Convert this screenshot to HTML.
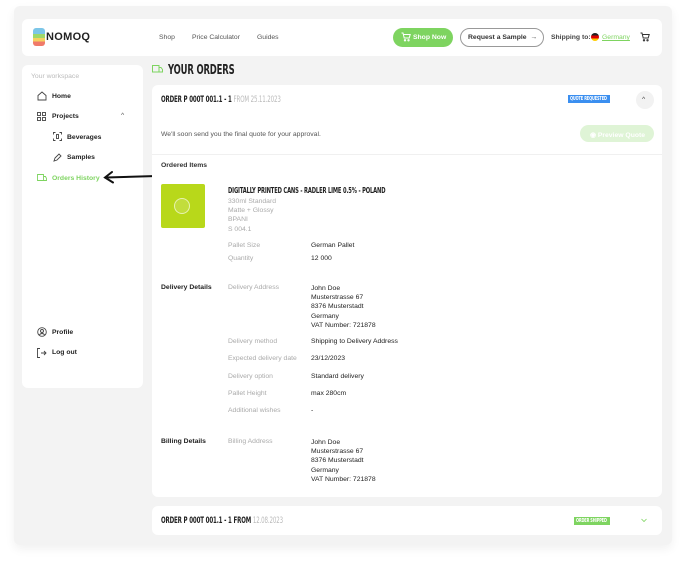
<!DOCTYPE html>
<html><head><meta charset="utf-8"><style>
*{margin:0;padding:0;box-sizing:border-box}
body{width:688px;height:564px;background:#fff;font-family:"Liberation Sans",sans-serif;position:relative;overflow:hidden;color:#222}
.a{position:absolute}
.frame{left:14px;top:6px;width:658px;height:539px;background:#f3f3f3;border-radius:6px;box-shadow:0 4px 10px rgba(0,0,0,.06)}
.card{background:#fff;border-radius:6px}
.t{font-size:6.8px;white-space:nowrap}
.g{color:#aaa}
.h{font-family:"DejaVu Sans Condensed","Liberation Sans",sans-serif;font-weight:bold;transform:scaleX(.72);transform-origin:left;white-space:nowrap;letter-spacing:-.2px}
.b{font-weight:bold}
</style></head><body>
<div class="a frame"></div>
<div class="a card" style="left:22px;top:19px;width:640px;height:37px"></div>
<div class="a" style="left:33px;top:28px;width:12px;height:18px;border-radius:3px;background:linear-gradient(#7cc6e8 0 33%,#9ed86a 33% 55%,#f5d160 55% 75%,#f07a6a 75%)"></div>
<div class="a b" style="left:46px;top:31px;font-size:11px;letter-spacing:.3px">NOMOQ</div>
<div class="a t" style="left:159px;top:34px;color:#555">Shop</div>
<div class="a t" style="left:192px;top:34px;color:#555">Price Calculator</div>
<div class="a t" style="left:257px;top:34px;color:#555">Guides</div>
<div class="a" style="left:393px;top:28px;width:60px;height:19px;border-radius:10px;background:#7ed460"></div>
<div class="a t b" style="left:413px;top:34px;color:#fff">Shop Now</div>
<svg class="a" style="left:401px;top:32px" width="10" height="10" viewBox="0 0 10 10" fill="none" stroke="#fff" stroke-width="1"><path d="M0.5 1h1.5l1.2 5h5l1-3.5H2.5"/><circle cx="4" cy="8.3" r=".7"/><circle cx="7.5" cy="8.3" r=".7"/></svg>
<div class="a" style="left:460px;top:28px;width:84px;height:19px;border-radius:10px;border:1px solid #999"></div>
<div class="a t b" style="left:468px;top:34px;color:#333">Request a Sample &nbsp;→</div>
<div class="a t b" style="left:551px;top:34px;color:#444">Shipping to:</div>
<div class="a" style="left:591px;top:33px;width:8px;height:8px;border-radius:50%;background:linear-gradient(#222 0 33%,#d00 33% 66%,#fc0 66%)"></div>
<div class="a t" style="left:602px;top:34px;color:#7ed460;text-decoration:underline">Germany</div>
<svg class="a" style="left:640px;top:32px" width="10" height="10" viewBox="0 0 10 10" fill="none" stroke="#333" stroke-width="1"><path d="M0.5 1h1.5l1.2 5h5l1-3.5H2.5"/><circle cx="4" cy="8.3" r=".7"/><circle cx="7.5" cy="8.3" r=".7"/></svg>
<div class="a card" style="left:22px;top:65px;width:121px;height:323px"></div>
<div class="a t" style="left:31px;top:73px;color:#bbb">Your workspace</div>
<svg class="a" style="left:37px;top:91px" width="10" height="10" viewBox="0 0 10 10" fill="none" stroke="#444" stroke-width=".9"><path d="M1 4.5L5 1l4 3.5V9H1z"/></svg>
<div class="a t b" style="left:52px;top:93px">Home</div>
<svg class="a" style="left:37px;top:112px" width="9" height="9" viewBox="0 0 9 9" fill="none" stroke="#444" stroke-width=".9"><rect x=".5" y=".5" width="3" height="3"/><rect x="5.5" y=".5" width="3" height="3"/><rect x=".5" y="5.5" width="3" height="3"/><rect x="5.5" y="5.5" width="3" height="3"/></svg>
<div class="a t b" style="left:52px;top:113px">Projects</div>
<div class="a t" style="left:121px;top:112px;color:#555">^</div>
<svg class="a" style="left:53px;top:132px" width="9" height="9" viewBox="0 0 9 9" fill="none" stroke="#444" stroke-width=".9"><path d="M.5 2.5v-2h2M6.5.5h2v2M8.5 6.5v2h-2M2.5 8.5h-2v-2"/><rect x="3.5" y="2.5" width="2" height="4"/></svg>
<div class="a t b" style="left:67px;top:134px">Beverages</div>
<svg class="a" style="left:53px;top:153px" width="9" height="9" viewBox="0 0 9 9" fill="none" stroke="#444" stroke-width=".9"><path d="M1 8l1-3 4-4 2 2-4 4z"/></svg>
<div class="a t b" style="left:67px;top:154px">Samples</div>
<svg class="a" style="left:37px;top:174px" width="10" height="8" viewBox="0 0 10 8" fill="none" stroke="#7ed460" stroke-width=".9"><path d="M.5.5h6v6h-6zM6.5 2.5h2l1 2v2h-3"/></svg>
<div class="a t b" style="left:52px;top:175px;color:#7ed460">Orders History</div>
<svg class="a" style="left:103px;top:170px" width="72" height="14" viewBox="0 0 72 14" fill="none" stroke="#111" stroke-width="2" stroke-linecap="round"><path d="M71 5.5C50 6 25 7 3 7.5M9 2L2 7.5l8 5"/></svg>
<svg class="a" style="left:37px;top:327px" width="10" height="10" viewBox="0 0 10 10" fill="none" stroke="#444" stroke-width=".9"><circle cx="5" cy="5" r="4.3"/><circle cx="5" cy="4" r="1.5"/><path d="M2.3 8c1.5-2 3.9-2 5.4 0"/></svg>
<div class="a t b" style="left:52px;top:329px">Profile</div>
<svg class="a" style="left:37px;top:348px" width="10" height="10" viewBox="0 0 10 10" fill="none" stroke="#444" stroke-width=".9"><path d="M3 .5H.5v9H3M4 5h5M7 3l2 2-2 2"/></svg>
<div class="a t b" style="left:52px;top:349px">Log out</div>
<svg class="a" style="left:152px;top:65px" width="11" height="9" viewBox="0 0 11 9" fill="none" stroke="#7ed460" stroke-width="1"><path d="M.5.5h6.5v6.5H.5zM7 2.5h2l1.5 2v2.5H7"/></svg>
<div class="a h" style="left:168px;top:63px;font-size:13px">YOUR ORDERS</div>
<div class="a card" style="left:152px;top:85px;width:510px;height:412px"></div>
<div class="a h" style="left:161px;top:95px;font-size:8.5px">ORDER P 000T 001.1 - 1 <span style="color:#bbb;font-weight:normal">FROM 25.11.2023</span></div>
<div class="a" style="left:568px;top:95px;width:42px;height:8px;background:#3b8ff0"></div>
<div class="a h" style="left:570px;top:96px;font-size:5.5px;color:#fff">QUOTE REQUESTED</div>
<div class="a" style="left:636px;top:91px;width:18px;height:18px;border-radius:50%;background:#f2f2f2"></div>
<div class="a t" style="left:642px;top:96px;color:#444">^</div>
<div class="a t" style="left:161px;top:131px;color:#555">We'll soon send you the final quote for your approval.</div>
<div class="a" style="left:580px;top:125px;width:74px;height:17px;border-radius:9px;background:#dff4d6"></div>
<div class="a t b" style="left:590px;top:131px;color:#fff">◉ Preview Quote</div>
<div class="a" style="left:152px;top:154px;width:510px;height:1px;background:#f0f0f0"></div>
<div class="a t b" style="left:161px;top:162px;color:#333">Ordered Items</div>
<div class="a" style="left:161px;top:184px;width:44px;height:44px;border-radius:2px;background:#b8d81a"></div>
<div class="a" style="left:174px;top:198px;width:16px;height:16px;border-radius:50%;border:1px solid rgba(255,255,255,.6);background:rgba(255,255,255,.15)"></div>
<div class="a h" style="left:228px;top:186px;font-size:8px">DIGITALLY PRINTED CANS - RADLER LIME 0.5% - POLAND</div>
<div class="a t g" style="left:228px;top:197px;line-height:9.2px">330ml Standard<br>Matte + Glossy<br>BPANI<br>S 004.1</div>
<div class="a t g" style="left:228px;top:242px">Pallet Size</div><div class="a t" style="left:311px;top:242px">German Pallet</div>
<div class="a t g" style="left:228px;top:255px">Quantity</div><div class="a t" style="left:311px;top:255px">12 000</div>
<div class="a t b" style="left:161px;top:284px">Delivery Details</div>
<div class="a t g" style="left:228px;top:284px">Delivery Address</div>
<div class="a t" style="left:311px;top:284px;line-height:9.2px">John Doe<br>Musterstrasse 67<br>8376 Musterstadt<br>Germany<br>VAT Number: 721878</div>
<div class="a t g" style="left:228px;top:338px">Delivery method</div><div class="a t" style="left:311px;top:338px">Shipping to Delivery Address</div>
<div class="a t g" style="left:228px;top:355px">Expected delivery date</div><div class="a t" style="left:311px;top:355px">23/12/2023</div>
<div class="a t g" style="left:228px;top:373px">Delivery option</div><div class="a t" style="left:311px;top:373px">Standard delivery</div>
<div class="a t g" style="left:228px;top:390px">Pallet Height</div><div class="a t" style="left:311px;top:390px">max 280cm</div>
<div class="a t g" style="left:228px;top:407px">Additional wishes</div><div class="a t" style="left:311px;top:407px">-</div>
<div class="a t b" style="left:161px;top:438px">Billing Details</div>
<div class="a t g" style="left:228px;top:438px">Billing Address</div>
<div class="a t" style="left:311px;top:438px;line-height:9.2px">John Doe<br>Musterstrasse 67<br>8376 Musterstadt<br>Germany<br>VAT Number: 721878</div>
<div class="a card" style="left:152px;top:506px;width:510px;height:29px"></div>
<div class="a h" style="left:161px;top:516px;font-size:8.5px">ORDER P 000T 001.1 - 1 FROM <span style="color:#bbb;font-weight:normal">12.08.2023</span></div>
<div class="a" style="left:574px;top:517px;width:36px;height:8px;background:#7ed460"></div>
<div class="a h" style="left:576px;top:518px;font-size:5.5px;color:#fff">ORDER SHIPPED</div>
<svg class="a" style="left:641px;top:518px" width="6" height="5" viewBox="0 0 6 5" fill="none" stroke="#7ed460" stroke-width=".8"><path d="M.5 1l2.5 2.5L5.5 1"/></svg>
</body></html>
